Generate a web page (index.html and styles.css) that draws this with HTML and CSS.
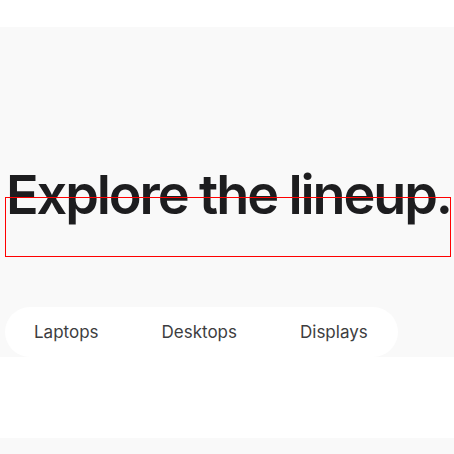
FILE: index.html
```html
<!DOCTYPE html>
<html>
<head>
<meta charset="utf-8">
<link rel="stylesheet" href="styles.css">
</head>
<body>
<div class="topbar"></div>
<section class="hero">
  <div class="heading-wrap">
    <h1 class="title">Explore the lineup.</h1>
    <div class="marker"></div>
  </div>
  <nav class="pill">
    <a class="pill-item">Laptops</a>
    <a class="pill-item">Desktops</a>
    <a class="pill-item">Displays</a>
  </nav>
</section>
<div class="spacer"></div>
<div class="footer-strip"></div>
</body>
</html>
```
FILE: styles.css
```css
html, body {
  margin: 0;
  padding: 0;
  background: #ffffff;
  font-family: Inter, "Noto Sans", sans-serif;
}
.topbar {
  height: 27px;
}
.hero {
  background: #f9f9f9;
  height: 330px;
  display: flex;
  flex-direction: column;
  padding: 0 5px;
}
.heading-wrap {
  position: relative;
  margin-top: 138px;
}
.title {
  margin: 0;
  font-size: 54px;
  font-weight: 600;
  line-height: 60px;
  letter-spacing: -2.1px;
  color: #1d1d1f;
  padding-left: 1px;
  white-space: nowrap;
}
.marker {
  position: absolute;
  left: 0;
  top: 32px;
  width: 446px;
  height: 60px;
  box-sizing: border-box;
  border: 1px solid #ff0000;
}
.pill {
  margin-top: auto;
  align-self: flex-start;
  height: 50px;
  background: #ffffff;
  border-radius: 25px;
  display: flex;
  align-items: center;
  gap: 63px;
  padding: 0 30px 0 29px;
}
.pill-item {
  font-size: 17px;
  color: #3d3d40;
  white-space: nowrap;
}
.spacer {
  height: 81px;
}
.footer-strip {
  height: 16px;
  background: #f9f9f9;
}
```
